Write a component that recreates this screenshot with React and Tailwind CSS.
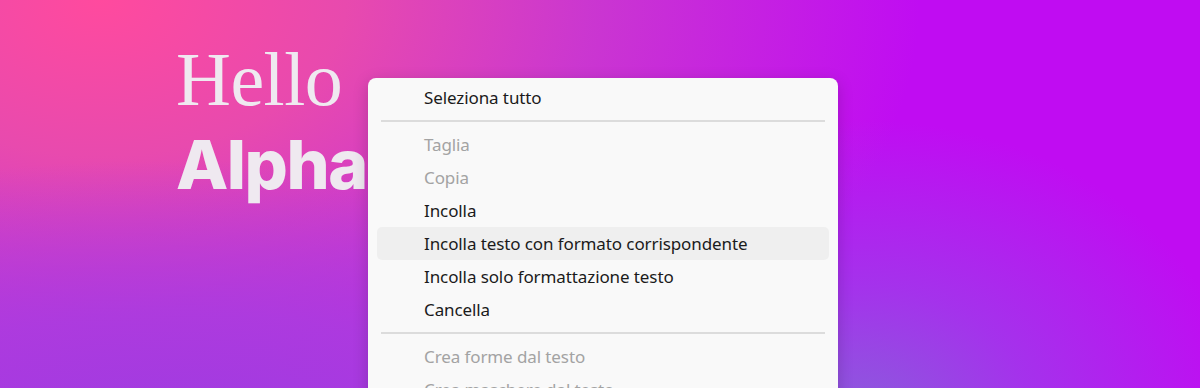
import React from 'react';

const items = [
  { label: 'Seleziona tutto' },
  { sep: true },
  { label: 'Taglia', disabled: true },
  { label: 'Copia', disabled: true },
  { label: 'Incolla' },
  { label: 'Incolla testo con formato corrispondente', active: true },
  { label: 'Incolla solo formattazione testo' },
  { label: 'Cancella' },
  { sep: true },
  { label: 'Crea forme dal testo', disabled: true },
  { label: 'Crea maschere dal testo', disabled: true },
];

export default function App() {
  return (
    <div className="relative h-[388px] w-[1200px] overflow-hidden bg-[#c00cf2] bg-[image:radial-gradient(ellipse_380px_300px_at_860px_420px,#8a5cdc_0%,rgba(150,70,232,0.65)_45%,rgba(192,12,242,0)_100%),radial-gradient(ellipse_760px_280px_at_180px_440px,#9e3ce0_0%,rgba(168,60,224,0.85)_45%,rgba(180,60,222,0)_100%),radial-gradient(ellipse_820px_520px_at_100px_0px,#ff4a9e_0%,#e84aae_30%,rgba(205,65,200,0.8)_60%,rgba(192,12,242,0)_100%)]">
      <div className="pl-[176px] pt-[34px] text-[#efe9f0]">
        <div className="font-['Liberation_Serif',serif] text-[76px] leading-[90px] tracking-[-0.5px]">Hello</div>
        <div className="font-['Inter',sans-serif] text-[68px] font-extrabold leading-[80px] tracking-[-1.5px]">Alpha</div>
      </div>

      <div className="absolute left-[368px] top-[78px] w-[470px] rounded-lg bg-[#f9f9f9] pt-[3px] shadow-[0_4px_16px_rgba(0,0,0,0.18)] font-['Noto_Sans',sans-serif] text-[17px] tracking-[-0.1px]">
        {items.map((it, i) =>
          it.sep ? (
            <div key={i} className="flex h-[14px] items-center px-[13px]">
              <div className="h-[2px] w-full bg-[#dcdcdc]" />
            </div>
          ) : (
            <div key={i} className="px-[9px]">
              <div
                className={`flex h-[33px] items-center rounded-[5px] pl-[47px] ${it.active ? 'bg-[#efefef]' : ''} ${it.disabled ? 'text-[#a3a3a3]' : 'text-[#1b1b1b]'}`}
              >
                {it.label}
              </div>
            </div>
          )
        )}
      </div>
    </div>
  );
}
